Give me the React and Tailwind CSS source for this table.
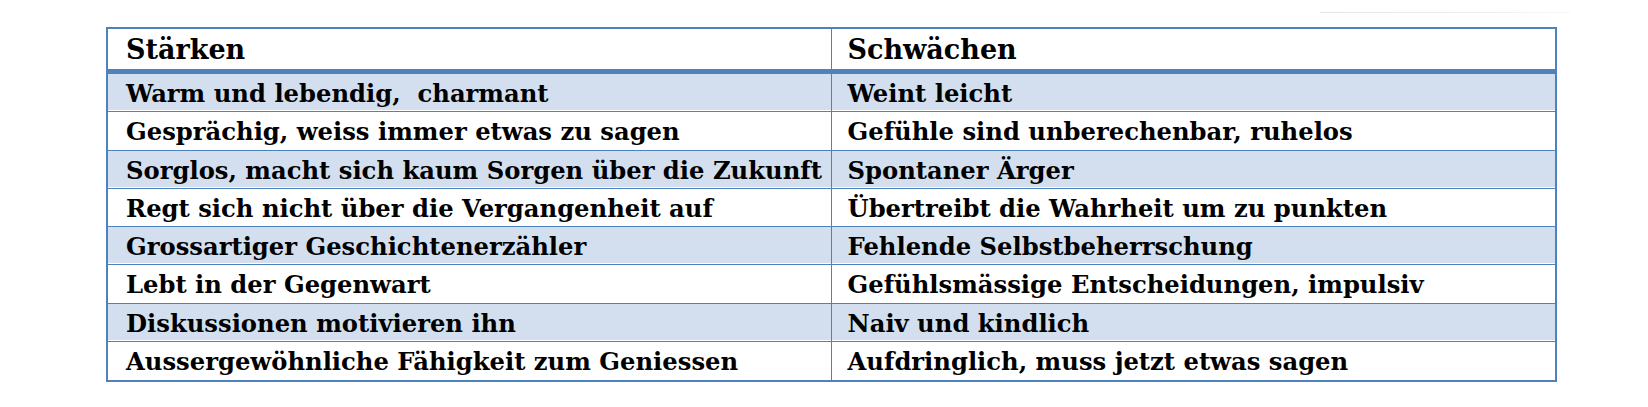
import React from 'react';

const rows = [
    ["Warm und lebendig,  charmant", "Weint leicht"],
    ["Gesprächig, weiss immer etwas zu sagen", "Gefühle sind unberechenbar, ruhelos"],
    ["Sorglos, macht sich kaum Sorgen über die Zukunft", "Spontaner Ärger"],
    ["Regt sich nicht über die Vergangenheit auf", "Übertreibt die Wahrheit um zu punkten"],
    ["Grossartiger Geschichtenerzähler", "Fehlende Selbstbeherrschung"],
    ["Lebt in der Gegenwart", "Gefühlsmässige Entscheidungen, impulsiv"],
    ["Diskussionen motivieren ihn", "Naiv und kindlich"],
    ["Aussergewöhnliche Fähigkeit zum Geniessen", "Aufdringlich, muss jetzt etwas sagen"],
];

const App = () => {
    return (
        <div className="w-[1648px] h-[407px] bg-white overflow-hidden font-['DejaVu_Serif',serif] text-black">
            {/* faint rule above the table, right side */}
            <div className="ml-[1320px] pt-[12px]">
                <div className="h-px w-[250px] bg-gradient-to-r from-[#e6e6e6] via-[#ebebeb] to-[#f7f7f7]" />
            </div>

            <div className="ml-[106px] mt-[14px] w-[1451px] border-2 border-[#4f81bd]">
                {/* Header */}
                <div className="grid grid-cols-2 h-[45px] border-b-[5px] border-[#4f81bd] text-[27px] font-bold">
                    <div className="flex items-center pl-[18px] pt-px border-r-[1.5px] border-[#4f81bd]">Stärken</div>
                    <div className="flex items-center pl-[16px] pt-px">Schwächen</div>
                </div>

                {/* Body rows */}
                {rows.map(([strength, weakness], i) => {
                    const shaded = i % 2 === 0;
                    const last = i === rows.length - 1;
                    return (
                        <div
                            key={i}
                            className={`grid grid-cols-2 h-[38.25px] text-[24.25px] font-bold ${shaded ? 'bg-[#d3dfee] shadow-[inset_0_-1px_0_#fff]' : 'bg-white'} ${last ? '' : 'border-b-[1.5px] border-[#4f81bd]'}`}
                        >
                            <div className="flex items-center pl-[18px] pt-[2px] border-r-[1.5px] border-[#4f81bd] whitespace-pre">{strength}</div>
                            <div className="flex items-center pl-[16px] pt-[2px] whitespace-pre">{weakness}</div>
                        </div>
                    );
                })}
            </div>
        </div>
    );
};

export default App;
